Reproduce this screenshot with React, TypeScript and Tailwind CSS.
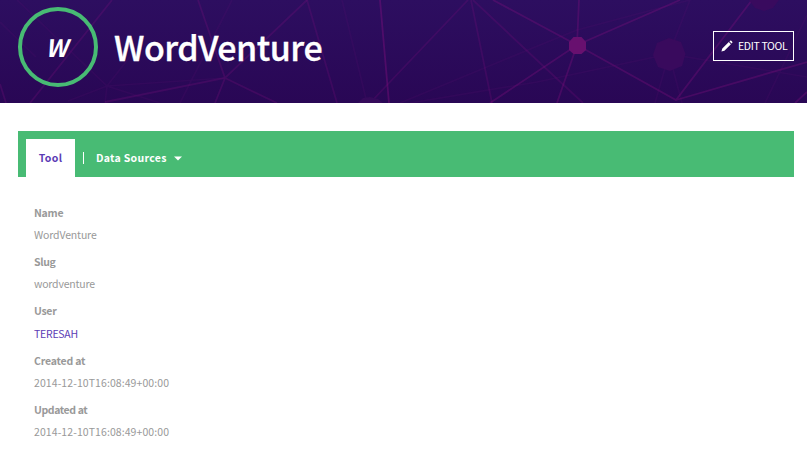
type Field = { label: string; value: string; labelClass: string; valueClass: string };

const fields: Field[] = [
  { label: "Name", value: "WordVenture", labelClass: "tracking-[-0.25px]", valueClass: "tracking-[-0.15px]" },
  { label: "Slug", value: "wordventure", labelClass: "tracking-[-0.35px]", valueClass: "tracking-[-0.2px]" },
  { label: "User", value: "TERESAH", labelClass: "tracking-[-0.3px]", valueClass: "tracking-[-0.25px] text-[#5b3cb5]" },
  { label: "Created at", value: "2014-12-10T16:08:49+00:00", labelClass: "tracking-[-0.2px]", valueClass: "tracking-[0.08px]" },
  { label: "Updated at", value: "2014-12-10T16:08:49+00:00", labelClass: "tracking-[-0.4px]", valueClass: "tracking-[0.08px]" },
];

function NetworkPattern() {
  return (
    <svg className="absolute inset-0 h-full w-full" viewBox="0 0 807 103" preserveAspectRatio="none" fill="none" aria-hidden="true">
      <g stroke="#8a1081" strokeWidth="1.8" strokeOpacity="0.3">
        <path d="M112 0L30 103M198 0L225 78L215 103M307 0L225 78L105 102M225 78L277 103M0 84L6 103" strokeOpacity="0.23" />
        <path d="M380 0L389 103" strokeOpacity="0.38" />
        <path d="M468 0L388 84L370 103M471 0L492 103M307 0L337 103M473 0L540 63L583 103" strokeOpacity="0.2" />
        <path d="M493 0L577 45L579 0M490 103L577 45L680 0M557 103L577 45L676 100L752 0M676 100L807 62M795 103L807 92" />
      </g>
      <g stroke="#7b107c" strokeWidth="1.7" strokeOpacity="0.1">
        <path d="M17 0L107 86L160 103M68 101L107 86L105 103M107 86L143 40M107 86L225 78M0 22L36 57M342 0L367 103M400 103L540 45L577 30M410 103L537 82L669 54M690 0L669 54L655 103M669 54L682 103M669 54L807 77M765 103L807 15M577 30L690 0M180 103L232 0" />
      </g>
      <path d="M573.5 37L581.5 37L586 42V50L581.5 54H573.5L569 50V42Z" fill="#68106f" />
      <path d="M669 38L681 42L685.5 54L682 66L670 71L658 67L653 55L657 43Z" fill="#390a5d" />
      <path d="M749 0L755 8L764 11L773 8L779 0Z" fill="#390a5e" />
      <path d="M358 103L363 98L370 97L378 99L383 103Z" fill="#350a5b" />
    </svg>
  );
}

function Header() {
  return (
    <header className="relative h-[103px] overflow-hidden bg-linear-to-b from-[#2d0e60] to-[#290755] text-white">
      <NetworkPattern />
      <div className="relative flex h-[94px] items-center pr-[13px] pl-[18px]">
        <div className="flex size-20 items-center justify-center rounded-full border-4 border-[#48bb74] pr-[3px] pb-px">
          <span className="text-[24px] leading-none font-bold italic">W</span>
        </div>
        <h1 className="ml-4 text-[34px] leading-[48px] font-medium tracking-[-0.5px] whitespace-nowrap [-webkit-text-stroke:0.3px_white]">WordVenture</h1>
        <button className="mb-0.5 ml-auto flex h-[30px] w-[81px] items-center border border-white pl-[7px] text-[10.5px] leading-4 tracking-[-0.35px] whitespace-nowrap">
          <svg className="mr-[5px] size-3 shrink-0" viewBox="0 0 12 12" fill="currentColor" aria-hidden="true">
            <path d="M.4 11.6L1.3 8.5L7.8 2.1L9.9 4.2L3.4 10.7ZM8.5 1.4L9.2.7Q9.7.3 10.3.8L11.2 1.7Q11.7 2.3 11.3 2.8L10.6 3.5Z" />
          </svg>
          EDIT TOOL
        </button>
      </div>
    </header>
  );
}

function Tabs() {
  return (
    <nav className="mr-[13px] ml-[18px] flex h-[46px] bg-[#48bb74] pt-2 pl-2 text-[10.5px] leading-4 font-bold">
      <a className="flex w-[49px] items-center justify-center bg-white pb-px tracking-[0.4px] text-[#5b3cb5]">Tool</a>
      <div className="ml-2 flex items-center text-white">
        <span className="h-3 w-px bg-white" />
        <a className="ml-3 w-[71px] pb-px tracking-[0.3px] whitespace-nowrap">Data Sources</a>
        <svg className="ml-[7px] h-[5px] w-2" viewBox="0 0 8 5" fill="currentColor" aria-hidden="true">
          <path d="M0 .5H8L4 4.5Z" />
        </svg>
      </div>
    </nav>
  );
}

export default function App() {
  return (
    <div className="min-h-[467px] bg-white font-['Noto_Sans_CJK_JP','Noto_Sans',sans-serif]">
      <Header />
      <main className="pt-7">
        <Tabs />
        <dl className="pt-[25px] pl-[34px] text-[10.5px] leading-[22px] text-[#999]">
          {fields.map(({ label, value, labelClass, valueClass }) => (
            <div key={label} className="h-[49.2px]">
              <dt className={`h-[22.15px] font-bold ${labelClass}`}>{label}</dt>
              <dd className={valueClass}>{value}</dd>
            </div>
          ))}
        </dl>
      </main>
    </div>
  );
}
